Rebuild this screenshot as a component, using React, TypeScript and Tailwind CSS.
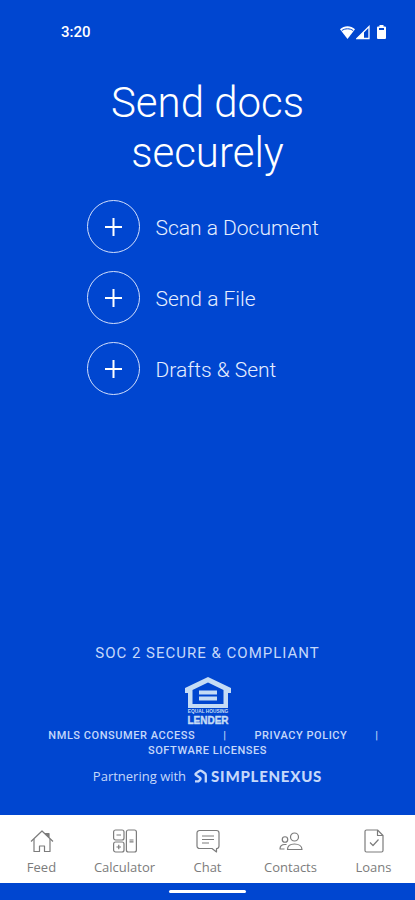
import React from "react";

const actions = ["Scan a Document", "Send a File", "Drafts & Sent"];

function StatusBar() {
  return (
    <header className="flex h-16 items-center justify-between pr-7 pl-[61px]">
      <span className="font-['Roboto',sans-serif] text-[15px] leading-5 font-medium">3:20</span>
      <span className="flex items-center text-white">
        <svg width="17" height="16" viewBox="0 0 17 16" aria-label="Wi-Fi">
          <path d="M8.5 15 1 5.2C5.3 1.3 11.7 1.3 16 5.2Z" fill="currentColor" />
          <path d="M2.8 6.6C6 4.2 11 4.2 14.2 6.6" fill="none" stroke="#0046d0" strokeWidth="1" />
        </svg>
        <svg width="14" height="16" viewBox="0 0 14 16" aria-label="Mobile signal">
          <path d="M1 14.5 13 2.5V14.5Z" fill="none" stroke="currentColor" strokeWidth="1.3" />
          <path d="M1 14.5 8 7.5V14.5Z" fill="currentColor" />
        </svg>
        <svg className="ml-1.5" width="11" height="16" viewBox="0 0 11 16" aria-label="Battery">
          <path d="M3.5 1h4v1.5H9a1 1 0 0 1 1 1V14a1 1 0 0 1-1 1H2a1 1 0 0 1-1-1V3.500a1 1 0 0 1 1-1h1.500Z" fill="currentColor" />
          <path d="M3 4h5v2H3Z" fill="#0046d0" />
        </svg>
      </span>
    </header>
  );
}

function ActionButton({ label }: { label: string }) {
  return (
    <button type="button" className="flex items-center gap-4 text-left">
      <span className="flex size-[53px] items-center justify-center rounded-full border border-[#d3dffc]">
        <svg width="17" height="18" viewBox="0 0 17 18" fill="none" stroke="currentColor" strokeWidth="2">
          <path d="M8.500 0v18M0 9h17" />
        </svg>
      </span>
      <span className="pt-0.5 font-['Roboto',sans-serif] text-[21px] leading-7 font-light text-[#e6eeff]">{label}</span>
    </button>
  );
}

function LenderMark() {
  return (
    <svg className="text-[#c5dcf5]" width="48" height="49" viewBox="0 0 48 49" role="img" aria-label="Equal housing lender">
      <path
        fillRule="evenodd"
        fill="currentColor"
        d="M24 1 47 12v5h-3v15H4V17H1v-5ZM24 6.500 8.500 14v14h31V14Z"
      />
      <path d="M15 14.500h18v4H15ZM15 20.500h18v4H15Z" fill="currentColor" />
      <text x="24" y="37" textAnchor="middle" fill="currentColor" fontFamily="Liberation Sans, sans-serif" fontSize="4.800" fontWeight="700">
        EQUAL HOUSING
      </text>
      <text
        x="24"
        y="47.500"
        textAnchor="middle"
        fill="currentColor"
        stroke="currentColor"
        strokeWidth="0.400"
        fontFamily="Liberation Sans, sans-serif"
        fontSize="10"
        fontWeight="700"
      >
        LENDER
      </text>
    </svg>
  );
}

function FeedIcon() {
  return (
    <>
      <path d="M1 12.500 12 2l11 10.500" />
      <path d="M4 10v12.500h5.500V17h5v5.500H20V10" />
      <path d="M15.500 4.500h3.500v3.500Z" fill="currentColor" />
    </>
  );
}

function CalculatorIcon() {
  return (
    <>
      <rect x="0.600" y="1" width="10.400" height="10" rx="2" />
      <rect x="0.600" y="13" width="10.400" height="10" rx="2" />
      <rect x="13.400" y="1" width="10" height="22" rx="2" />
      <path d="M3.500 6h4.500M3.500 18h4.500M5.750 15.750v4.500M16.500 11h4M16.500 12.800h4" />
    </>
  );
}

function ChatIcon() {
  return (
    <>
      <path d="M3.500 1.500h17A2.500 2.500 0 0 1 23 4v13a2.500 2.500 0 0 1-2.500 2.500V23L16 19.500H3.500A2.500 2.500 0 0 1 1 17V4a2.500 2.500 0 0 1 2.500-2.500Z" />
      <path d="M6 7h12M6 10.500h12M6 14h7" />
    </>
  );
}

function ContactsIcon() {
  return (
    <>
      <circle cx="15.500" cy="8" r="4" />
      <circle cx="6" cy="10.500" r="2.750" />
      <path d="M8.500 20.500c0-3.500 3-5.500 7-5.500s7.500 2 7.500 5.500Z" />
      <path d="M5.500 20H1c0-3 2-4.500 5-4.500h1.500" />
    </>
  );
}

function LoansIcon() {
  return (
    <>
      <path d="M4.500 1h11L21 6.500v15a1.500 1.500 0 0 1-1.500 1.500h-15A1.500 1.500 0 0 1 3 21.500v-19A1.500 1.500 0 0 1 4.500 1Z" />
      <path d="M15.500 1v5.500H21" />
      <path d="m8 13.500 3 3 5.500-6" />
    </>
  );
}

const tabs = [
  { label: "Feed", Icon: FeedIcon },
  { label: "Calculator", Icon: CalculatorIcon },
  { label: "Chat", Icon: ChatIcon },
  { label: "Contacts", Icon: ContactsIcon },
  { label: "Loans", Icon: LoansIcon },
];

function TabBar() {
  return (
    <nav className="grid h-[68px] grid-cols-5 bg-white font-['Open_Sans','Noto_Sans',sans-serif] text-[#7c7c7c]">
      {tabs.map(({ label, Icon }) => (
        <a key={label} href="#" className="flex flex-col items-center gap-1 pt-3.5">
          <svg width="24" height="24" viewBox="0 0 24 24" fill="none" stroke="currentColor" strokeWidth="1.200" strokeLinejoin="round">
            <Icon />
          </svg>
          <span className="text-[13px] leading-5">{label}</span>
        </a>
      ))}
    </nav>
  );
}

export default function App() {
  return (
    <div className="flex min-h-screen flex-col bg-[#0046d0] text-white">
      <StatusBar />
      <main className="flex flex-1 flex-col items-center justify-between">
        <section className="flex w-full flex-col items-center pt-3.5">
          <h1 className="w-60 text-center font-['Roboto',sans-serif] text-[42px] leading-[50px] font-light">
            Send docs securely
          </h1>
          <div className="mt-[22px] flex w-[242px] flex-col gap-[18px]">
            {actions.map((label) => (
              <ActionButton key={label} label={label} />
            ))}
          </div>
        </section>
        <footer className="flex w-full flex-col items-center pb-[29px] font-['Roboto',sans-serif] text-[#c5d8fa]">
          <p className="text-[15px] leading-5 tracking-[1px]">SOC 2 SECURE &amp; COMPLIANT</p>
          <div className="mt-[13px]">
            <LenderMark />
          </div>
          <div className="mt-[3px] flex flex-col items-center text-[11px] leading-[15px] font-medium tracking-wider">
            <div className="flex gap-7 pl-3">
              <a href="#">NMLS CONSUMER ACCESS</a>
              <span>|</span>
              <a href="#">PRIVACY POLICY</a>
              <span>|</span>
            </div>
            <a href="#">SOFTWARE LICENSES</a>
          </div>
          <div className="mt-2 flex items-center">
            <span className="font-['Open_Sans',sans-serif] text-[13px] leading-5">Partnering with</span>
            <svg className="ml-2" width="13" height="14" viewBox="0 0 13 14" fill="none" stroke="currentColor" strokeWidth="2.300">
              <path d="M11.800 13.500V6.200Q11.800 5 10.800 4.200L8 2.200Q6.500 1.200 5 2.200L2 4.300Q1 5.200 2 6L6 8.700Q7.200 9.800 6 10.900L4.500 12.300H1" />
            </svg>
            <span className="ml-1 font-['Lato',sans-serif] text-[15px] leading-5 font-black tracking-wider">SIMPLENEXUS</span>
          </div>
        </footer>
      </main>
      <TabBar />
      <div className="flex h-[17px] items-center justify-center">
        <div className="h-[3px] w-[77px] rounded-full bg-white" />
      </div>
    </div>
  );
}
